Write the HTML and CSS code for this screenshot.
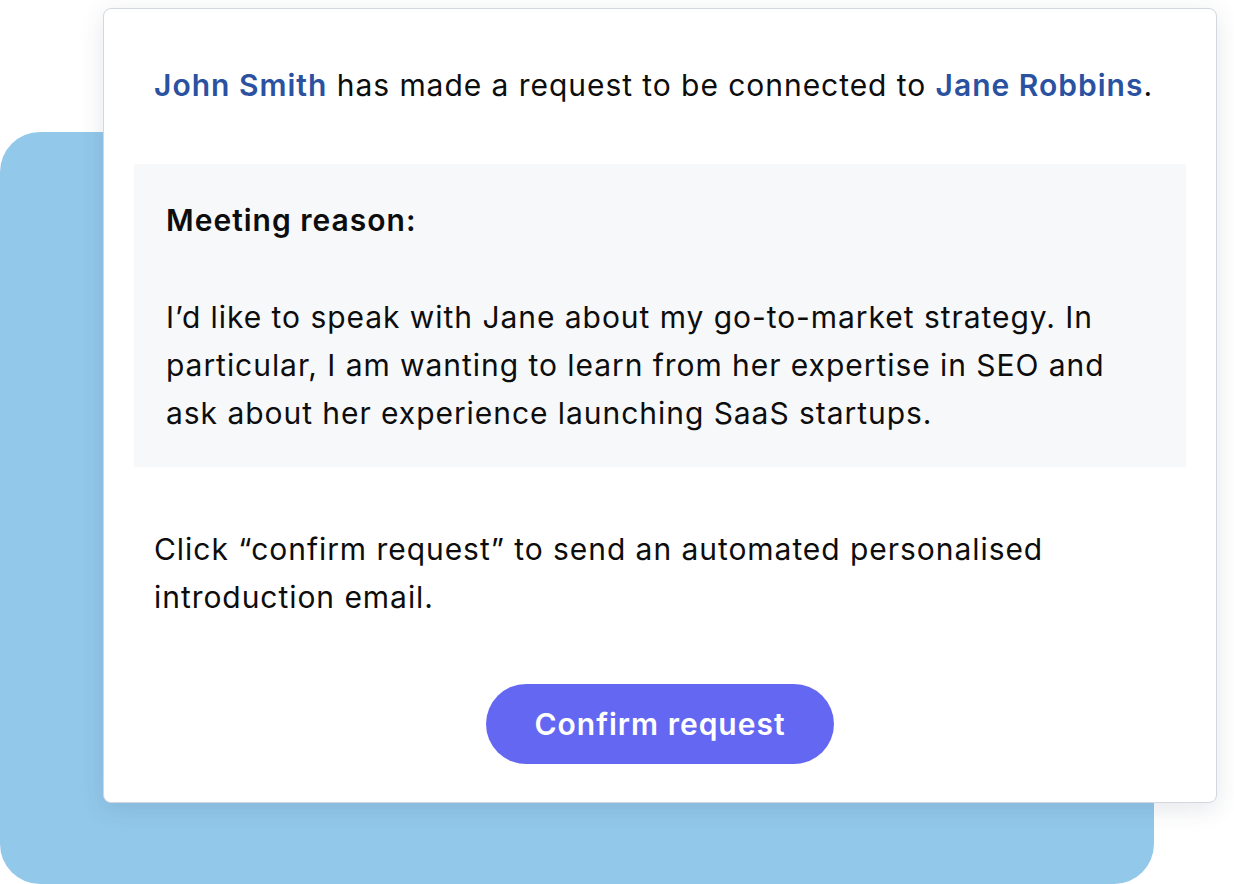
FILE: index.html
```html
<!DOCTYPE html>
<html lang="en">
  <head>
    <meta charset="UTF-8" />
    <title>Connection Request</title>
    <link rel="stylesheet" href="styles.css">
  </head>
  <body>
    <div class="stage">
      <div class="backdrop"></div>
      <div class="request-card">
        <p class="intro">
          <span class="name">John Smith</span> has made a request to be connected to <span class="name">Jane Robbins</span>.
        </p>
        <div class="reason-box">
          <h3>Meeting reason:</h3>
          <p>I&rsquo;d like to speak with Jane about my go-to-market strategy. In particular, I am wanting to learn from her expertise in SEO and ask about her experience launching SaaS startups.</p>
        </div>
        <p class="note">Click &ldquo;confirm request&rdquo; to send an automated personalised introduction email.</p>
        <div class="actions">
          <button type="button">Confirm request</button>
        </div>
      </div>
    </div>
  </body>
</html>
```

FILE: styles.css
```css
body {
  margin: 0;
  font-family: Inter, "Noto Sans", Arial, sans-serif;
  letter-spacing: 0.95px;
  background-color: #fff;
  color: #0d0d0d;
}

.stage {
  position: relative;
  width: 1234px;
  height: 884px;
  overflow: hidden;
}

/* blue panel sitting behind the card */
.backdrop {
  position: absolute;
  left: 0;
  top: 132px;
  width: 1154px;
  height: 752px;
  background-color: #92c8ea;
  border-radius: 40px;
}

.request-card {
  position: absolute;
  left: 103px;
  top: 8px;
  width: 1052px;
  padding: 52px 30px 38px;
  background-color: #fff;
  border: 1px solid #d3d7df;
  border-radius: 8px;
  box-shadow: 0 6px 24px rgba(40, 60, 90, 0.12);
}

.intro,
.note {
  margin: 0;
  padding: 0 20px;
  font-size: 30px;
  line-height: 48px;
}

.name {
  color: #2b52a1;
  font-weight: 600;
  letter-spacing: 1px;
}

.reason-box {
  margin-top: 55px;
  padding: 32px 30px 30px 32px;
  background-color: #f7f8fa;
}

.reason-box h3 {
  margin: 0 0 49px;
  font-size: 30px;
  line-height: 48px;
  font-weight: 600;
  letter-spacing: 1px;
}

.reason-box p {
  margin: 0;
  font-size: 30px;
  line-height: 48px;
}

.note {
  margin-top: 58px;
}

.actions {
  display: flex;
  justify-content: center;
  margin-top: 63px;
}

button {
  width: 348px;
  height: 80px;
  background-color: #6467f2;
  color: #fff;
  font-family: inherit;
  font-size: 30px;
  font-weight: 600;
  letter-spacing: 1px;
  border: none;
  border-radius: 40px;
  cursor: pointer;
}
```
